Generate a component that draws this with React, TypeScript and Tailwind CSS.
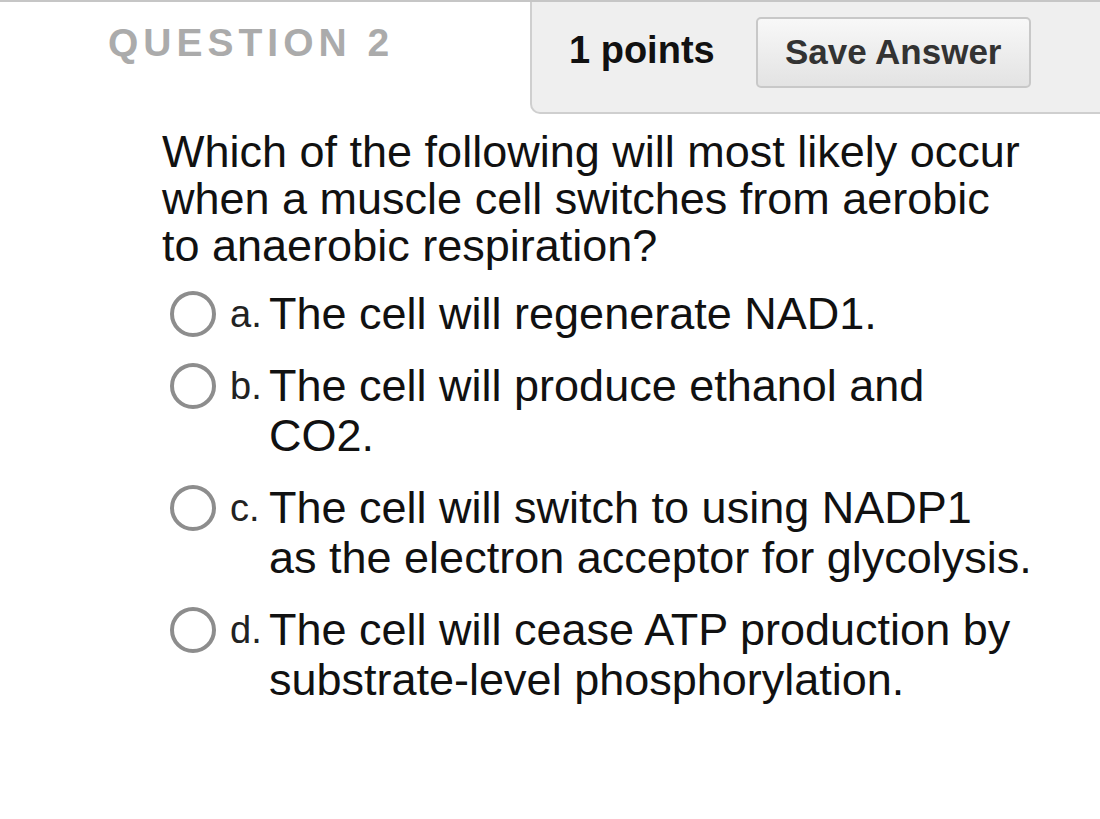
const options = [
  { key: "a.", lines: ["The cell will regenerate NAD1."] },
  { key: "b.", lines: ["The cell will produce ethanol and", "CO2."] },
  { key: "c.", lines: ["The cell will switch to using NADP1", "as the electron acceptor for glycolysis."] },
  { key: "d.", lines: ["The cell will cease ATP production by", "substrate-level phosphorylation."] },
];

function Radio() {
  return <div className="h-[46px] w-[46px] shrink-0 rounded-full border-[4px] border-[#8d8d8d] bg-white" />;
}

export default function App() {
  return (
    <div className="min-h-[819px] w-[1100px] bg-white font-['Liberation_Sans',Arial,sans-serif] text-[#111]">
      <div className="h-[2px] w-full bg-[#c6c6c6]" />
      <div className="flex items-start justify-between">
        <h2 className="pl-[108px] pt-[21px] text-[39px] font-bold leading-none tracking-[5px] text-[#ababab]">
          QUESTION 2
        </h2>
        <div className="flex h-[112px] w-[570px] items-start gap-[41px] rounded-bl-[10px] border-b-2 border-l-2 border-[#cfcfcf] bg-[#efefef] pl-[37px] pt-[15px]">
          <span className="pt-[14px] text-[38px] font-bold leading-none text-[#111]">1 points</span>
          <button className="flex h-[71px] w-[275px] items-center justify-center rounded-[5px] border-2 border-[#c8c8c8] bg-gradient-to-b from-[#f8f8f8] to-[#e3e3e3] text-[35px] font-bold text-[#333]">
            Save Answer
          </button>
        </div>
      </div>

      <div className="pl-[162px] pt-[14px]">
        <p className="w-[866px] text-[45px] leading-[47px]">
          Which of the following will most likely occur when a muscle cell switches from aerobic to anaerobic
          respiration?
        </p>
      </div>

      <ul className="mt-[20px] flex flex-col gap-[22px] pl-[170px]">
        {options.map((o) => (
          <li key={o.key} className="flex items-start">
            <div className="pt-[2px]">
              <Radio />
            </div>
            <span className="w-[53px] shrink-0 pl-[14px] text-[38px] leading-[50px] text-[#222]">{o.key}</span>
            <span className="text-[45px] leading-[50px]">
              {o.lines.map((l, i) => (
                <span key={i} className="block">
                  {l}
                </span>
              ))}
            </span>
          </li>
        ))}
      </ul>
    </div>
  );
}
